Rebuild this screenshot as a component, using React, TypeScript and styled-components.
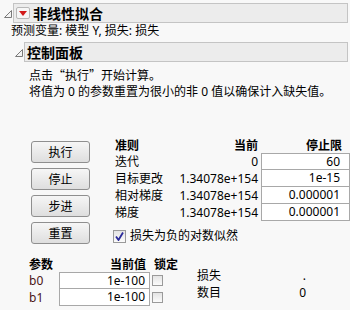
import React from "react";
import styled, { createGlobalStyle } from "styled-components";

const GlobalStyle = createGlobalStyle`
  html, body { margin: 0; padding: 0; background: #f8f8f8; }
  body {
    font-family: "Noto Sans", "Noto Sans CJK SC", sans-serif;
    font-size: 12px;
    color: #000;
  }
`;

const Page = styled.div`
  width: 350px;
  height: 310px;
  overflow: hidden;
  background: #f8f8f8;
`;

const OutlineRow = styled.div<{ $indent: number; $top: number }>`
  display: flex;
  align-items: center;
  margin-left: ${(p) => p.$indent}px;
  margin-top: ${(p) => p.$top}px;
`;

const Twist = styled.svg`
  flex: none;
  width: 11px;
  height: 20px;
`;

const TitleBox = styled.div`
  flex: 1;
  box-sizing: border-box;
  height: 20px;
  margin-right: 2px;
  border: 1px solid #c4c4c4;
  background: #ececec;
  display: flex;
  align-items: center;
  padding-left: 2px;
  gap: 3px;
`;

const Title = styled.span`
  font-weight: bold;
  font-size: 14px;
  line-height: 18px;
  font-family: "Noto Sans CJK SC", sans-serif;
`;

const MenuBtn = styled.div`
  flex: none;
  box-sizing: border-box;
  width: 14px;
  height: 12px;
  border: 1px solid #b8b8b8;
  border-radius: 2px;
  background: #f6f6f6;
  display: flex;
  align-items: center;
  justify-content: center;
`;

const Line = styled.div<{ $indent: number }>`
  margin-left: ${(p) => p.$indent}px;
  line-height: 16px;
  white-space: nowrap;
`;

const Quote = styled.span`
  font-family: "Noto Sans CJK SC", sans-serif;
  font-feature-settings: "fwid" 1;
`;

const Notes = styled.div`
  margin-top: 5px;
`;

const Controls = styled.div`
  display: flex;
  margin-left: 31px;
  margin-top: 36px;
`;

const ButtonCol = styled.div`
  display: flex;
  flex-direction: column;
  gap: 5px;
  margin-top: 5px;
  width: 59px;
`;

const Button = styled.button`
  box-sizing: border-box;
  width: 59px;
  height: 22px;
  padding: 0;
  border: 1px solid #8f8f8f;
  border-radius: 3px;
  background: linear-gradient(#f6f6f6, #dedede);
  font-family: "Noto Sans CJK SC", sans-serif;
  font-size: 12px;
  line-height: 20px;
  color: #000;
`;

const RightCol = styled.div`
  margin-left: 25px;
  display: flex;
  flex-direction: column;
`;

const CritGrid = styled.div`
  display: grid;
  grid-template-columns: 55px 85px 89px;
  column-gap: 3px;
  grid-auto-rows: 17px;
`;

const Head = styled.div<{ $right?: boolean }>`
  font-weight: bold;
  line-height: 17px;
  white-space: nowrap;
  text-align: ${(p) => (p.$right ? "right" : "left")};
  font-family: "Noto Sans CJK SC", sans-serif;
`;

const Cell = styled.div<{ $right?: boolean }>`
  line-height: 17px;
  white-space: nowrap;
  text-align: ${(p) => (p.$right ? "right" : "left")};
`;

const Input = styled.div<{ $first?: boolean; $pad: number }>`
  box-sizing: border-box;
  height: 17px;
  background: #fff;
  border: 1px solid #a8a8a8;
  border-top-width: ${(p) => (p.$first ? 1 : 0)}px;
  text-align: right;
  padding-right: ${(p) => p.$pad}px;
  line-height: ${(p) => (p.$first ? 15 : 16)}px;
  white-space: nowrap;
`;

const CheckRow = styled.div`
  display: flex;
  align-items: center;
  gap: 4px;
  margin-top: 7px;
  margin-left: -2px;
  line-height: 16px;
`;

const Box = styled.div<{ $size: number }>`
  flex: none;
  box-sizing: border-box;
  width: ${(p) => p.$size}px;
  height: ${(p) => p.$size}px;
  border: 1px solid #9a9a9a;
  background: linear-gradient(#e4e4e4, #fbfbfb);
  display: flex;
  align-items: center;
  justify-content: center;
`;

const Params = styled.div`
  display: flex;
  align-items: flex-start;
  margin-left: 29px;
  margin-top: 11px;
`;

const ParamGrid = styled.div`
  display: grid;
  grid-template-columns: 30px 91px 40px;
  grid-auto-rows: 17px;
`;

const ParamName = styled.div`
  line-height: 17px;
  color: #4a1414;
`;

const LockCell = styled.div`
  display: flex;
  align-items: center;
  padding-left: 2px;
`;

const LockHead = styled(Head)`
  padding-left: 4px;
`;

const ValHead = styled(Head)`
  padding-right: 4px;
`;

const LimitHead = styled(Head)`
  padding-right: 8px;
`;

const Stats = styled.div`
  display: grid;
  grid-template-columns: 50px 59px;
  grid-auto-rows: 17px;
  margin-left: 7px;
  margin-top: 12px;
`;

const Triangle = () => (
  <Twist viewBox="0 0 11 20">
    <path d="M2.5 14.5 L9.5 7.5 L9.5 14.5 Z" fill="#f4f4f4" stroke="#7a7a7a" strokeWidth="1" />
  </Twist>
);

export default function App() {
  return (
    <Page>
      <GlobalStyle />
      <OutlineRow $indent={2} $top={3}>
        <Triangle />
        <TitleBox>
          <MenuBtn>
            <svg width="8" height="5" viewBox="0 0 8 5">
              <path d="M0 0 L8 0 L4 5 Z" fill="#d21a1a" />
            </svg>
          </MenuBtn>
          <Title>非线性拟合</Title>
        </TitleBox>
      </OutlineRow>
      <Line $indent={11}>预测变量: 模型 Y, 损失: 损失</Line>
      <OutlineRow $indent={13} $top={3}>
        <Triangle />
        <TitleBox>
          <Title>控制面板</Title>
        </TitleBox>
      </OutlineRow>
      <Notes>
        <Line $indent={29}>
          点击<Quote>“</Quote>执行<Quote>”</Quote>开始计算。
        </Line>
        <Line $indent={29}>将值为 0 的参数重置为很小的非 0 值以确保计入缺失值。</Line>
      </Notes>
      <Controls>
        <ButtonCol>
          <Button>执行</Button>
          <Button>停止</Button>
          <Button>步进</Button>
          <Button>重置</Button>
        </ButtonCol>
        <RightCol>
          <CritGrid>
            <Head>准则</Head>
            <Head $right>当前</Head>
            <LimitHead $right>停止限</LimitHead>
            <Cell>迭代</Cell>
            <Cell $right>0</Cell>
            <Input $first $pad={9}>60</Input>
            <Cell>目标更改</Cell>
            <Cell $right>1.34078e+154</Cell>
            <Input $pad={9}>1e-15</Input>
            <Cell>相对梯度</Cell>
            <Cell $right>1.34078e+154</Cell>
            <Input $pad={9}>0.000001</Input>
            <Cell>梯度</Cell>
            <Cell $right>1.34078e+154</Cell>
            <Input $pad={9}>0.000001</Input>
          </CritGrid>
          <CheckRow>
            <Box $size={13}>
              <svg width="9" height="9" viewBox="0 0 9 9">
                <path d="M1 4.5 L3.5 8 L8 0.5" fill="none" stroke="#2a2a9a" strokeWidth="1.8" />
              </svg>
            </Box>
            <span>损失为负的对数似然</span>
          </CheckRow>
        </RightCol>
      </Controls>
      <Params>
        <ParamGrid>
          <Head>参数</Head>
          <ValHead $right>当前值</ValHead>
          <LockHead>锁定</LockHead>
          <ParamName>b0</ParamName>
          <Input $first $pad={4}>1e-100</Input>
          <LockCell>
            <Box $size={11} />
          </LockCell>
          <ParamName>b1</ParamName>
          <Input $pad={4}>1e-100</Input>
          <LockCell>
            <Box $size={11} />
          </LockCell>
        </ParamGrid>
        <Stats>
          <Cell>损失</Cell>
          <Cell $right>.</Cell>
          <Cell>数目</Cell>
          <Cell $right>0</Cell>
        </Stats>
      </Params>
    </Page>
  );
}
